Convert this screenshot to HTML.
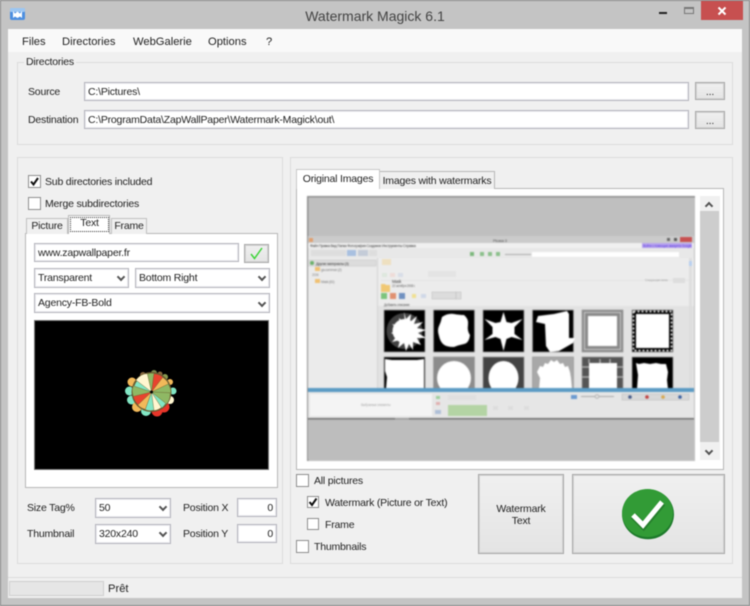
<!DOCTYPE html>
<html><head><meta charset="utf-8"><style>
html,body{margin:0;padding:0;width:750px;height:606px;overflow:hidden;background:#c4c4c4}
#w{position:absolute;left:0;top:0;width:750px;height:606px;overflow:hidden;filter:blur(.4px);font-family:"Liberation Sans","DejaVu Sans",sans-serif;font-size:10.500px;letter-spacing:-.2px;color:#222}
#w div{position:absolute;box-sizing:border-box}
.t{white-space:nowrap;line-height:14px;height:14px}
.m{font-size:11.200px;letter-spacing:0}
.g{border:1px solid #dcdcdc}
.i{background:#fff;border:1px solid #b4b4bc;box-shadow:inset 0 0 0 1px #ececf0;white-space:nowrap;line-height:18px;padding-left:3px}
.s{line-height:18px}
.c{background:#fff;border:1px solid #8e8e8e}
.b{background:linear-gradient(#f0f0f0,#e4e4e4);border:1px solid #a8a8a8;box-shadow:inset 0 0 0 1px #d4d4d4;text-align:center}
.v{width:6px;height:6px;border-right:2px solid #555;border-bottom:2px solid #555;transform:rotate(45deg)}
</style></head><body><div id="w">
<div style="left:0;top:0;width:750px;height:606px;border:1px solid #8c8c8c;background:#c4c4c4"></div>
<!-- title bar -->
<svg style="position:absolute;left:9px;top:7px" width="17" height="14" viewBox="0 0 17 14"><rect x="1" y="1" width="15" height="12" rx="2" fill="#4d8fe0"/><rect x="1" y="1" width="15" height="4" rx="1" fill="#9cc6f2"/><path d="M4 4l2 2.500 2.500-2 2.500 2 2-2.500v7l-2-1.500-2.500 1.500-2.500-1.500-2 1.500z" fill="#fff"/></svg>
<div class="t" style="left:240px;width:270px;top:8px;text-align:center;font-size:14px;letter-spacing:0;line-height:16px;height:16px;color:#444">Watermark Magick 6.1</div>
<div style="left:659px;top:12px;width:8px;height:2px;background:#222"></div>
<div style="left:684px;top:7px;width:10px;height:7px;border:1px solid #777;border-top-width:2px"></div>
<div style="left:701px;top:1px;width:42px;height:19px;background:#c75050"></div>
<svg style="position:absolute;left:717px;top:6px" width="10" height="10"><path d="M1.500 1.500l7 7M8.500 1.500l-7 7" stroke="#fff" stroke-width="2"/></svg>
<!-- client -->
<div style="left:8px;top:29px;width:734px;height:569px;background:#f0f0f0"></div>
<div style="left:8px;top:29px;width:734px;height:23px;background:#f9f9f9"></div>
<div class="t m" style="left:22px;top:35px">Files</div>
<div class="t m" style="left:62px;top:35px">Directories</div>
<div class="t m" style="left:133px;top:35px">WebGalerie</div>
<div class="t m" style="left:208px;top:35px">Options</div>
<div class="t m" style="left:266px;top:35px">?</div>
<!-- directories -->
<div class="g" style="left:17px;top:62px;width:716px;height:83px"></div>
<div class="t" style="left:24px;top:55px;background:#f0f0f0;padding:0 2px;">Directories</div>
<div class="t" style="left:28px;top:85px">Source</div>
<div class="i" style="left:84px;top:82px;width:605px;height:19px">C:\Pictures\</div>
<div class="b" style="left:695px;top:82px;width:30px;height:18px;line-height:18px">...</div>
<div class="t" style="left:28px;top:113px">Destination</div>
<div class="i" style="left:84px;top:110px;width:605px;height:19px">C:\ProgramData\ZapWallPaper\Watermark-Magick\out\</div>
<div class="b" style="left:695px;top:111px;width:30px;height:18px;line-height:18px">...</div>
<!-- left group -->
<div class="g" style="left:17px;top:157px;width:266px;height:407px"></div>
<div class="c" style="left:28px;top:175px;width:13px;height:13px"></div>
<svg style="position:absolute;left:28px;top:175px" width="13" height="13"><path d="M3 6.500l2.500 3L10 3" fill="none" stroke="#111" stroke-width="2"/></svg>
<div class="t" style="left:45px;top:175px">Sub directories included</div>
<div class="c" style="left:28px;top:197px;width:13px;height:13px"></div>
<div class="t" style="left:45px;top:197px">Merge subdirectories</div>
<!-- left tabs -->
<div style="left:25px;top:233px;width:253px;height:255px;background:#fff;border:1px solid #b8b8b8"></div>
<div style="left:26px;top:218px;width:42px;height:16px;background:#f0f0f0;border:1px solid #c0c0c0;border-bottom:0;line-height:15px;text-align:center">Picture</div>
<div style="left:111px;top:218px;width:36px;height:16px;background:#f0f0f0;border:1px solid #c0c0c0;border-bottom:0;line-height:15px;text-align:center">Frame</div>
<div style="left:68px;top:215px;width:42px;height:19px;background:#fff;border:1px solid #b8b8b8;border-bottom:0"></div>
<div style="left:70px;top:217px;width:39px;height:15px;border:1px dotted #333;line-height:11px;text-align:center">Text</div>
<div class="i" style="left:34px;top:243px;width:205px;height:19px">www.zapwallpaper.fr</div>
<div class="b" style="left:244px;top:244px;width:25px;height:19px"></div>
<svg style="position:absolute;left:249px;top:246px" width="15" height="15"><path d="M2 8l3.500 4.500L13 2" fill="none" stroke="#3ed43a" stroke-width="1.500"/></svg>
<div class="i s" style="left:34px;top:268px;width:95px;height:20px">Transparent</div>
<div class="v" style="left:118px;top:274px"></div>
<div class="i s" style="left:135px;top:268px;width:135px;height:20px">Bottom Right</div>
<div class="v" style="left:259px;top:274px"></div>
<div class="i s" style="left:34px;top:293px;width:236px;height:20px">Agency-FB-Bold</div>
<div class="v" style="left:259px;top:300px"></div>
<div style="left:34px;top:320px;width:235px;height:150px;background:#000;border:1px solid #777"></div>
<svg style="position:absolute;left:120px;top:360px" width="64" height="64" viewBox="120 360 64 64">
<g><circle cx="132" cy="382" r="4.500" fill="#f2b95a"/><circle cx="129.500" cy="391" r="4.500" fill="#82e6c4"/><circle cx="131.500" cy="400" r="4.500" fill="#82e6c4"/><circle cx="137" cy="407" r="5" fill="#f2b95a"/><circle cx="146" cy="411" r="5" fill="#82e6c4"/><circle cx="157" cy="411" r="5.500" fill="#e8352a"/><circle cx="164" cy="407" r="5.500" fill="#e8352a"/><circle cx="170" cy="400" r="4" fill="#fff6d0"/><circle cx="173" cy="391" r="3.500" fill="#82e6c4"/><circle cx="170" cy="382" r="3" fill="#f2b95a"/><circle cx="165" cy="377" r="3" fill="#8a9a50"/><circle cx="154" cy="373" r="3" fill="#7a8a50"/><circle cx="143" cy="375" r="3" fill="#8a6a40"/><circle cx="160" cy="374" r="2.500" fill="#8a6a40"/></g>
<circle cx="151.500" cy="392" r="20" fill="#6a5a30"/>
<g transform="translate(151.500 392)" stroke="#6a6030" stroke-width=".4">
<path d="M0 0L-4 -18Q3 -20 7 -17Z" transform="rotate(-8)" fill="#8fb864"/>
<path d="M0 0L-4 -18Q3 -20 7 -17Z" transform="rotate(20)" fill="#e8432e"/>
<path d="M0 0L-4 -18Q3 -20 7 -17Z" transform="rotate(50)" fill="#f2b95a"/>
<path d="M0 0L-5 -18Q3 -21 8 -17Z" transform="rotate(80)" fill="#8fb864"/>
<path d="M0 0L-5 -18Q3 -21 8 -17Z" transform="rotate(108)" fill="#8fb864"/>
<path d="M0 0L-3 -18Q3 -20 6 -17Z" transform="rotate(138)" fill="#82e6c4"/>
<path d="M0 0L-4 -18Q3 -20 6 -17Z" transform="rotate(160)" fill="#fff6d0"/>
<path d="M0 0L-4 -18Q3 -20 6 -17Z" transform="rotate(185)" fill="#82e6c4"/>
<path d="M0 0L-4 -18Q3 -20 7 -17Z" transform="rotate(212)" fill="#f2b95a"/>
<path d="M0 0L-5 -18Q3 -20 7 -17Z" transform="rotate(242)" fill="#e8432e"/>
<path d="M0 0L-5 -18Q3 -21 7 -17Z" transform="rotate(272)" fill="#8fb864"/>
<path d="M0 0L-3 -18Q2 -19 5 -17Z" transform="rotate(298)" fill="#82e6c4"/>
<path d="M0 0L-5 -19Q3 -21 8 -17Z" transform="rotate(322)" fill="#fff6d0"/>
</g>
<circle cx="151.500" cy="392" r="1.500" fill="#000"/>
</svg>
<!-- bottom left -->
<div class="t" style="left:27px;top:501px">Size Tag%</div>
<div class="i s" style="left:95px;top:498px;width:76px;height:20px">50</div>
<div class="v" style="left:160px;top:504px"></div>
<div class="t" style="left:183px;top:501px">Position X</div>
<div class="i" style="left:237px;top:498px;width:40px;height:19px;text-align:right;padding-right:3px">0</div>
<div class="t" style="left:27px;top:527px">Thumbnail</div>
<div class="i s" style="left:95px;top:524px;width:76px;height:20px">320x240</div>
<div class="v" style="left:160px;top:530px"></div>
<div class="t" style="left:183px;top:527px">Position Y</div>
<div class="i" style="left:237px;top:524px;width:40px;height:19px;text-align:right;padding-right:3px">0</div>
<!-- right group -->
<div class="g" style="left:290px;top:157px;width:443px;height:407px"></div>
<div style="left:296px;top:188px;width:428px;height:282px;background:#fff;border:1px solid #b8b8b8"></div>
<div style="left:379px;top:171px;width:116px;height:18px;background:#f0f0f0;border:1px solid #b8b8b8;border-bottom:0;text-align:center;line-height:18px;white-space:nowrap">Images with watermarks</div>
<div style="left:296px;top:169px;width:84px;height:20px;background:#fff;border:1px solid #c8c8c8;border-bottom:0;text-align:center;line-height:18px;white-space:nowrap">Original Images</div>
<svg style="position:absolute;left:307px;top:196px;filter:blur(.45px)" width="388" height="265" viewBox="307 196 388 265">
<rect x="307" y="196" width="388" height="265" fill="#bfbfbf"/>
<rect x="307" y="196" width="388" height="1.500" fill="#8e8e8e"/>
<rect x="307" y="196" width="1.500" height="265" fill="#8e8e8e"/>
<rect x="308" y="236" width="386" height="7" fill="#cbcbcb"/>
<rect x="308" y="243" width="386" height="5" fill="#f0f0f0"/>
<rect x="308" y="248" width="386" height="10" fill="#e8e8e8"/>
<rect x="308" y="258" width="386" height="130" fill="#ececec"/>
<rect x="308" y="258" width="69" height="130" fill="#ebebeb"/>
<rect x="377" y="258" width="1" height="130" fill="#d4d4d4"/>
<rect x="378" y="306" width="316" height="82" fill="#e2e2e2"/>
<g>
<rect x="309" y="238" width="4" height="4" fill="#e0a070"/>
<rect x="680" y="237" width="12" height="5" fill="#c75050"/>
<rect x="667" y="238" width="3" height="3" fill="#666"/><rect x="674" y="238" width="3" height="3" fill="#555"/>
<text x="493" y="242" font-size="4" fill="#555">Picasa 3</text>
<text x="310" y="247" font-size="3.600" fill="#333">Файл  Правка  Вид  Папка  Фотография  Создание  Инструменты  Справка</text>
<rect x="642" y="243" width="50" height="5" fill="#b9a5ee"/>
<text x="643" y="247" font-size="3.400" fill="#5a3ae0">Войти с помощью аккаунта Google</text>
<rect x="311" y="250" width="35" height="6" fill="#ddd"/><rect x="347" y="250" width="9" height="6" fill="#a8c0e0"/><rect x="358" y="250" width="10" height="6" fill="#c4ccd8"/><rect x="369" y="250" width="8" height="6" fill="#ddd"/>
<rect x="470" y="252" width="4" height="4" fill="#7cb87c"/><rect x="480" y="252" width="4" height="4" fill="#8ac08a"/><rect x="488" y="252" width="4" height="4" fill="#8ac08a"/><rect x="496" y="252" width="4" height="4" fill="#8ac08a"/>
<rect x="505" y="254" width="26" height="1" fill="#aaa"/>
<rect x="532" y="252" width="147" height="5" fill="#fff"/>
<rect x="309" y="260" width="67" height="6" fill="#dcdcdc" stroke="#c4c4c4" stroke-width=".5"/>
<circle cx="312" cy="263" r="2" fill="#6ab06a"/>
<text x="316" y="265" font-size="3.600" fill="#333">Другие материалы (3)</text>
<rect x="315" y="267" width="5" height="4" fill="#f0c070"/>
<text x="321" y="271" font-size="3.400" fill="#777">ga-common (2)</text>
<text x="312" y="276" font-size="3.200" fill="#888">2008</text>
<rect x="315" y="279" width="5" height="4" fill="#f0c070"/>
<text x="321" y="283" font-size="3.400" fill="#777">Mask (61)</text>
<rect x="382" y="259" width="9" height="6" fill="#eee0c0"/>
<rect x="382" y="273" width="5" height="4" fill="#dde8dd"/><rect x="390" y="273" width="5" height="4" fill="#eedcd8"/><rect x="398" y="273" width="5" height="4" fill="#d8dde8"/><rect x="428" y="271" width="28" height="6" fill="#e4e4e4"/>
<rect x="381" y="280" width="312" height="0.500" fill="#ddd"/>
<path d="M381 284h4l1 1h4v7h-9z" fill="#f0c874"/>
<text x="392" y="283" font-size="4.200" fill="#444">Mask</text>
<text x="392" y="287" font-size="3.200" fill="#666">22 октября 2008 г.</text>
<rect x="381" y="293" width="6" height="6" fill="#7cc47c"/><rect x="390" y="293" width="6" height="6" fill="#e09070"/><rect x="399" y="293" width="6" height="6" fill="#7090c0"/><rect x="412" y="294" width="4" height="4" fill="#f0e090"/><rect x="421" y="294" width="5" height="4" fill="#d0d8e8"/>
<rect x="432" y="292" width="24" height="7" fill="#dcdcdc" stroke="#bbb" stroke-width=".5"/><rect x="456" y="292" width="5" height="7" fill="#dcdcdc" stroke="#bbb" stroke-width=".5"/>
<text x="384" y="306" font-size="3.200" fill="#555">Добавить описание</text>
<text x="645" y="281" font-size="3" fill="#999">Следующая папка</text>
<rect x="673" y="278" width="12" height="5" fill="#ddd"/>
<rect x="689" y="258" width="3" height="130" fill="#dedede"/><rect x="689" y="261" width="3" height="5" fill="#b8d0f0"/>
<!-- thumbnails -->
<g stroke="#999" stroke-width=".7">
<rect x="384" y="310" width="41" height="42" fill="#000"/><rect x="433.500" y="310" width="41" height="42" fill="#000"/><rect x="483" y="310" width="41" height="42" fill="#000"/><rect x="532.500" y="310" width="41" height="42" fill="#000"/><rect x="582" y="310" width="41" height="42" fill="#8a8a8a"/><rect x="632" y="310" width="41" height="42" fill="#000"/>
<rect x="384" y="357" width="41" height="32" fill="#000"/><rect x="433.500" y="357" width="41" height="32" fill="#8c8c8c"/><rect x="483" y="357" width="41" height="32" fill="#444"/><rect x="532.500" y="357" width="41" height="32" fill="#a8a8a8"/><rect x="582" y="357" width="41" height="32" fill="#555"/><rect x="632" y="357" width="41" height="32" fill="#000"/>
</g>
<circle cx="404.500" cy="331" r="18" fill="#777" opacity=".55"/>
<g fill="#fff">
<path d="M404 312l2 7 5-5-1 8 7-6-3 8 9-2-6 6 9 2-8 3 8 5-9 0 4 7-8-3 0 8-4-6-3 7-2-8-6 5 2-8-8 2 5-6-6-3 7-3-6-6 8 2-1-8 6 5z"/>
<circle cx="404.500" cy="331" r="12"/>
<path d="M442 317q6-4 12-3t10 1q5 4 4 10t2 10q-1 8-6 9t-10 3q-8 0-11-3t-4-8q-2-6 0-10t3-9z"/>
<path d="M503.500 312l3 10 5 1 11-4-8 8 0 7 8 6-11-3-5 2-3 12-3-12-5-2-11 3 8-6 0-7-8-8 11 4 5-1z"/>
<path d="M538 316l16-2 13-3 2 3v24l6 0-2 5-14 8-9 1-4-6-1-22-9-2z"/>
<rect x="588" y="316" width="29" height="30"/>
<rect x="636" y="314" width="33" height="34"/>
<path d="M385 359l7 1 25 0 7-1 0 29-38 1 1-12-2-6z"/>
<circle cx="454" cy="378" r="17"/>
<ellipse cx="503.500" cy="378" rx="15" ry="17"/>
<path d="M537 372l3-6 3 1 2-4 3 1 3-4 3 2 3-2 3 4 3-1 2 4 3-1 2 6 1 6 1 11h-33l1-11z"/>
<rect x="589" y="363" width="28" height="26"/>
<path d="M636 363l3 1 5-1 6 1 6-1 5 1 5 0 2 8-1 8 1 9h-31l1-14z"/>
</g>
<rect x="584.500" y="312.500" width="36" height="37" fill="none" stroke="#c8c8c8" stroke-width="1"/>
<rect x="633.500" y="311.500" width="38" height="39" fill="none" stroke="#fff" stroke-width="1.500" stroke-dasharray="2 2"/>
<path d="M582 367h7M582 377h7M617 367h6M617 377h6M589 359v4M600 359v4M610 359v4" stroke="#aaa" stroke-width="1.500"/>
</g>
<!-- bottom bar -->
<rect x="308" y="388" width="386" height="4" fill="#5b9bc4"/>
<rect x="308" y="392" width="386" height="26" fill="#e6e6e6"/>
<rect x="310" y="394" width="122" height="22" fill="#f4f4f4"/>
<g>
<text x="361" y="406" font-size="3.200" fill="#aaa">Выбранные элементы</text>
<rect x="436" y="396" width="4" height="3" fill="#9fd09f"/><rect x="436" y="402" width="4" height="3" fill="#e0b0b0"/><rect x="435" y="410" width="6" height="4" fill="#b0c0d8"/>
<rect x="448" y="405" width="39" height="11" fill="#b4d4a4"/>
<rect x="448" y="395" width="28" height="5" fill="#e0e0e0"/>
<rect x="493" y="406" width="5" height="4" fill="#ddd"/><rect x="508" y="406" width="5" height="4" fill="#ddd"/><rect x="524" y="406" width="5" height="4" fill="#ddd"/>
<rect x="571" y="395" width="6" height="4" fill="#6a9ad0"/>
<rect x="581" y="396" width="33" height="1" fill="#aaa"/><circle cx="597" cy="396.500" r="2" fill="#ddd" stroke="#999" stroke-width=".5"/>
<rect x="622" y="394" width="67" height="6" fill="#d8d8d8" stroke="#bbb" stroke-width=".5"/>
<circle cx="630" cy="397" r="1.800" fill="#445a88"/><circle cx="647" cy="397" r="1.800" fill="#c04040"/><circle cx="663" cy="397" r="1.800" fill="#d8a850"/><circle cx="680" cy="397" r="1.800" fill="#3a60a0"/>
</g>
<rect x="308" y="418" width="386" height="1.500" fill="#707070"/>
<rect x="395" y="418" width="14" height="1.500" fill="#999"/>
<rect x="308" y="419.500" width="386" height="40" fill="#bdbdbd"/>
</svg>
<!-- scrollbar -->
<div style="left:700px;top:196px;width:20px;height:264px;background:#f0f0f0"></div>
<div style="left:700px;top:211px;width:19px;height:231px;background:#cdcdcd"></div>
<div class="v" style="left:706px;top:203px;transform:rotate(225deg)"></div>
<div class="v" style="left:706px;top:448px"></div>
<!-- bottom right checks -->
<div class="c" style="left:296px;top:474px;width:13px;height:13px"></div>
<div class="t" style="left:314px;top:474px">All pictures</div>
<div class="c" style="left:307px;top:496px;width:12px;height:12px"></div>
<svg style="position:absolute;left:307px;top:496px" width="12" height="12"><path d="M2.500 6l2.500 3L9.500 2.500" fill="none" stroke="#111" stroke-width="2"/></svg>
<div class="t" style="left:325px;top:496px">Watermark (Picture or Text)</div>
<div class="c" style="left:307px;top:518px;width:12px;height:12px"></div>
<div class="t" style="left:325px;top:518px">Frame</div>
<div class="c" style="left:296px;top:540px;width:13px;height:13px"></div>
<div class="t" style="left:314px;top:540px">Thumbnails</div>
<div class="b" style="left:478px;top:474px;width:86px;height:80px;line-height:12px;padding-top:28px">Watermark<br>Text</div>
<div class="b" style="left:572px;top:474px;width:153px;height:80px"></div>
<svg style="position:absolute;left:618px;top:484px" width="60" height="60" viewBox="618 484 60 60">
<ellipse cx="648" cy="514.300" rx="26" ry="25" fill="#1d7a2b"/>
<ellipse cx="647.500" cy="513" rx="25.500" ry="24" fill="#329b36"/>
<path d="M633 515l10 10 19-23" fill="none" stroke="#1f6d28" stroke-width="7" transform="translate(.5 1)" opacity=".6"/>
<path d="M633 515l10 10 19-23" fill="none" stroke="#fff" stroke-width="5"/>
</svg>
<!-- status -->
<div style="left:8px;top:577px;width:734px;height:1px;background:#dcdcdc"></div>
<div style="left:9px;top:581px;width:95px;height:15px;background:#e6e6e6;border:1px solid #cfcfcf"></div>
<div class="t m" style="left:108px;top:582px">Prêt</div>
</div></body></html>
